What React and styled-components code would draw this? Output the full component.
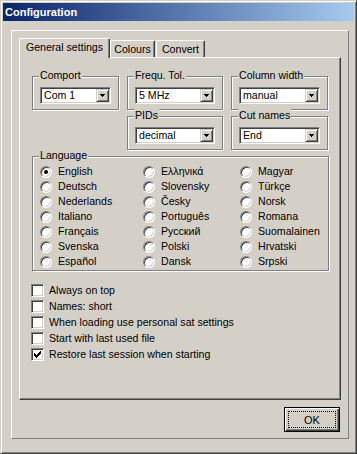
import React from 'react';
import styled, { createGlobalStyle } from 'styled-components';

const Global = createGlobalStyle`
  html, body { margin: 0; padding: 0; background: #d4d0c8; }
  body {
    font-family: "Liberation Sans", Arial, sans-serif;
    font-size: 10.6px;
    color: #000;
  }
  * { box-sizing: border-box; }
`;

const Window = styled.div`
  width: 357px;
  height: 454px;
  background: #d4d0c8;
  border: 1px solid;
  border-color: #d4d0c8 #404040 #404040 #d4d0c8;
  box-shadow: inset 1px 1px 0 #fff, inset -1px -1px 0 #808080;
  padding: 2px;
  display: flex;
  flex-direction: column;
`;

const TitleBar = styled.div`
  height: 18px;
  background: linear-gradient(to right, #0a246a, #a6caf0);
  color: #fff;
  font-weight: bold;
  font-size: 11px;
  line-height: 18px;
  padding-left: 2px;
  white-space: nowrap;
`;

const Body = styled.div`
  padding: 9px 5px 0 8px;
`;

const Frame = styled.div`
  border: 1px solid;
  border-color: #fff #808080 #808080 #fff;
  padding: 7px 7px 6px 7px;
  display: flex;
  flex-direction: column;
`;

const TabStrip = styled.div`
  display: flex;
  align-items: flex-start;
  height: 19px;
  position: relative;
  z-index: 1;
`;

const Tab = styled.div`
  width: ${p => p.w}px;
  height: ${p => (p.active ? 20 : 17)}px;
  margin-top: ${p => (p.active ? 0 : 2)}px;
  margin-left: ${p => p.ml || 0}px;
  background: #d4d0c8;
  border-top: 1px solid #fff;
  border-left: 1px solid #fff;
  border-right: 1px solid #404040;
  box-shadow: inset -1px 0 0 #808080;
  border-radius: 2px 2px 0 0;
  padding-top: 2px;
  line-height: 13px;
  text-align: center;
  white-space: nowrap;
`;

const Panel = styled.div`
  height: 343px;
  border: 1px solid;
  border-color: #fff #404040 #404040 #fff;
  box-shadow: inset -1px -1px 0 #808080;
  padding: 18px 11px 0 12px;
`;

const TopRow = styled.div`
  display: grid;
  grid-template-columns: 87px 96px 97px;
  column-gap: 8px;
  align-items: start;
`;

const Column = styled.div`
  display: flex;
  flex-direction: column;
  gap: 6px;
`;

const Group = styled.div`
  position: relative;
  border: 1px solid #808080;
  box-shadow: inset 1px 1px 0 #fff, 1px 1px 0 #fff;
  padding: ${p => p.pad || '10px 7px 5px 7px'};
  margin-top: ${p => p.mt || 0}px;
`;

const Legend = styled.span`
  position: absolute;
  top: -8px;
  left: 6px;
  padding: 0 1px;
  background: #d4d0c8;
  line-height: 13px;
  white-space: nowrap;
`;

const Combo = styled.div`
  height: 17px;
  background: #fff;
  border: 1px solid;
  border-color: #808080 #fff #fff #808080;
  box-shadow: inset 1px 1px 0 #404040, inset -1px -1px 0 #d4d0c8;
  display: flex;
  align-items: center;
  padding-left: 3px;
  white-space: nowrap;
`;

const ComboValue = styled.span`
  flex: 1;
  line-height: 13px;
`;

const DropButton = styled.span`
  width: 13px;
  height: 13px;
  margin: 1px;
  background: #d4d0c8;
  border: 1px solid;
  border-color: #d4d0c8 #404040 #404040 #d4d0c8;
  box-shadow: inset 1px 1px 0 #fff, inset -1px -1px 0 #808080;
  display: flex;
  align-items: center;
  justify-content: center;
`;

const Arrow = () => (
  <svg width="5" height="3" viewBox="0 0 5 3" shapeRendering="crispEdges">
    <path d="M0 0h5v1H0z M1 1h3v1H1z M2 2h1v1H2z" fill="#000" />
  </svg>
);

const Select = ({ value }) => (
  <Combo>
    <ComboValue>{value}</ComboValue>
    <DropButton>
      <Arrow />
    </DropButton>
  </Combo>
);

const RadioGrid = styled.div`
  display: grid;
  grid-template-columns: 103px 97px 1fr;
  grid-template-rows: repeat(7, 15px);
  grid-auto-flow: column;
`;

const Option = styled.div`
  display: flex;
  align-items: center;
  white-space: nowrap;
`;

const Radio = styled.span`
  flex: none;
  width: 12px;
  height: 12px;
  border-radius: 50%;
  border: 1px solid;
  border-color: #808080 #fff #fff #808080;
  background: #fff;
  box-shadow: inset 1px 1px 0 #404040, inset -1px -1px 0 #d4d0c8;
  display: flex;
  align-items: center;
  justify-content: center;
`;

const Dot = styled.span`
  width: 4px;
  height: 4px;
  border-radius: 50%;
  background: #000;
`;

const RadioLabel = styled.span`
  margin-left: 6px;
  line-height: 13px;
`;

const CheckList = styled.div`
  margin-top: 11px;
  margin-left: -1px;
  display: flex;
  flex-direction: column;
`;

const CheckRow = styled.div`
  height: 16px;
  display: flex;
  align-items: center;
  white-space: nowrap;
`;

const Box = styled.span`
  flex: none;
  width: 13px;
  height: 13px;
  background: #fff;
  border: 1px solid;
  border-color: #808080 #fff #fff #808080;
  box-shadow: inset 1px 1px 0 #404040, inset -1px -1px 0 #d4d0c8;
  display: flex;
  align-items: center;
  justify-content: center;
`;

const CheckLabel = styled.span`
  margin-left: 5px;
  line-height: 13px;
`;

const checkPath =
  'M6 0h1v1H6z M5 1h2v1H5z M0 2h1v1H0z M4 2h3v1H4z M0 3h2v1H0z M3 3h3v1H3z M0 4h5v1H0z M1 5h3v1H1z M2 6h1v1H2z';

const CheckMark = () => (
  <svg width="7" height="7" viewBox="0 0 7 7" shapeRendering="crispEdges">
    <path d={checkPath} fill="#000" />
  </svg>
);

const ButtonRow = styled.div`
  display: flex;
  justify-content: flex-end;
  margin-top: 7px;
  padding-right: 1px;
`;

const Button = styled.div`
  width: 56px;
  height: 25px;
  border: 1px solid #000;
  background: #d4d0c8;
  box-shadow: inset 1px 1px 0 #fff, inset -1px -1px 0 #404040, inset -2px -2px 0 #808080;
  padding: 3px;
  display: flex;
`;

const Focus = styled.span`
  flex: 1;
  border: 1px dotted #000;
  display: flex;
  align-items: center;
  justify-content: center;
  font-size: 11px;
`;

const languages = [
  'English', 'Deutsch', 'Nederlands', 'Italiano', 'Français', 'Svenska', 'Español',
  'Ελληνικά', 'Slovensky', 'Česky', 'Português', 'Русский', 'Polski', 'Dansk',
  'Magyar', 'Türkçe', 'Norsk', 'Romana', 'Suomalainen', 'Hrvatski', 'Srpski',
];

const options = [
  { label: 'Always on top', checked: false },
  { label: 'Names: short', checked: false },
  { label: 'When loading use personal sat settings', checked: false },
  { label: 'Start with last used file', checked: false },
  { label: 'Restore last session when starting', checked: true },
];

export default function App() {
  return (
    <>
      <Global />
      <Window>
        <TitleBar>Configuration</TitleBar>
        <Body>
          <Frame>
            <TabStrip>
              <Tab active w={91}>General settings</Tab>
              <Tab w={45}>Colours</Tab>
              <Tab w={49} ml={1}>Convert</Tab>
            </TabStrip>
            <Panel>
              <TopRow>
                <Group>
                  <Legend>Comport</Legend>
                  <Select value="Com 1" />
                </Group>
                <Column>
                  <Group>
                    <Legend>Frequ. Tol.</Legend>
                    <Select value="5 MHz" />
                  </Group>
                  <Group>
                    <Legend>PIDs</Legend>
                    <Select value="decimal" />
                  </Group>
                </Column>
                <Column>
                  <Group>
                    <Legend>Column width</Legend>
                    <Select value="manual" />
                  </Group>
                  <Group>
                    <Legend>Cut names</Legend>
                    <Select value="End" />
                  </Group>
                </Column>
              </TopRow>
              <Group mt={6} pad="7px 0 1px 7px">
                <Legend>Language</Legend>
                <RadioGrid>
                  {languages.map((l, i) => (
                    <Option key={l}>
                      <Radio>{i === 0 && <Dot />}</Radio>
                      <RadioLabel>{l}</RadioLabel>
                    </Option>
                  ))}
                </RadioGrid>
              </Group>
              <CheckList>
                {options.map(o => (
                  <CheckRow key={o.label}>
                    <Box>{o.checked && <CheckMark />}</Box>
                    <CheckLabel>{o.label}</CheckLabel>
                  </CheckRow>
                ))}
              </CheckList>
            </Panel>
            <ButtonRow>
              <Button>
                <Focus>OK</Focus>
              </Button>
            </ButtonRow>
          </Frame>
        </Body>
      </Window>
    </>
  );
}
